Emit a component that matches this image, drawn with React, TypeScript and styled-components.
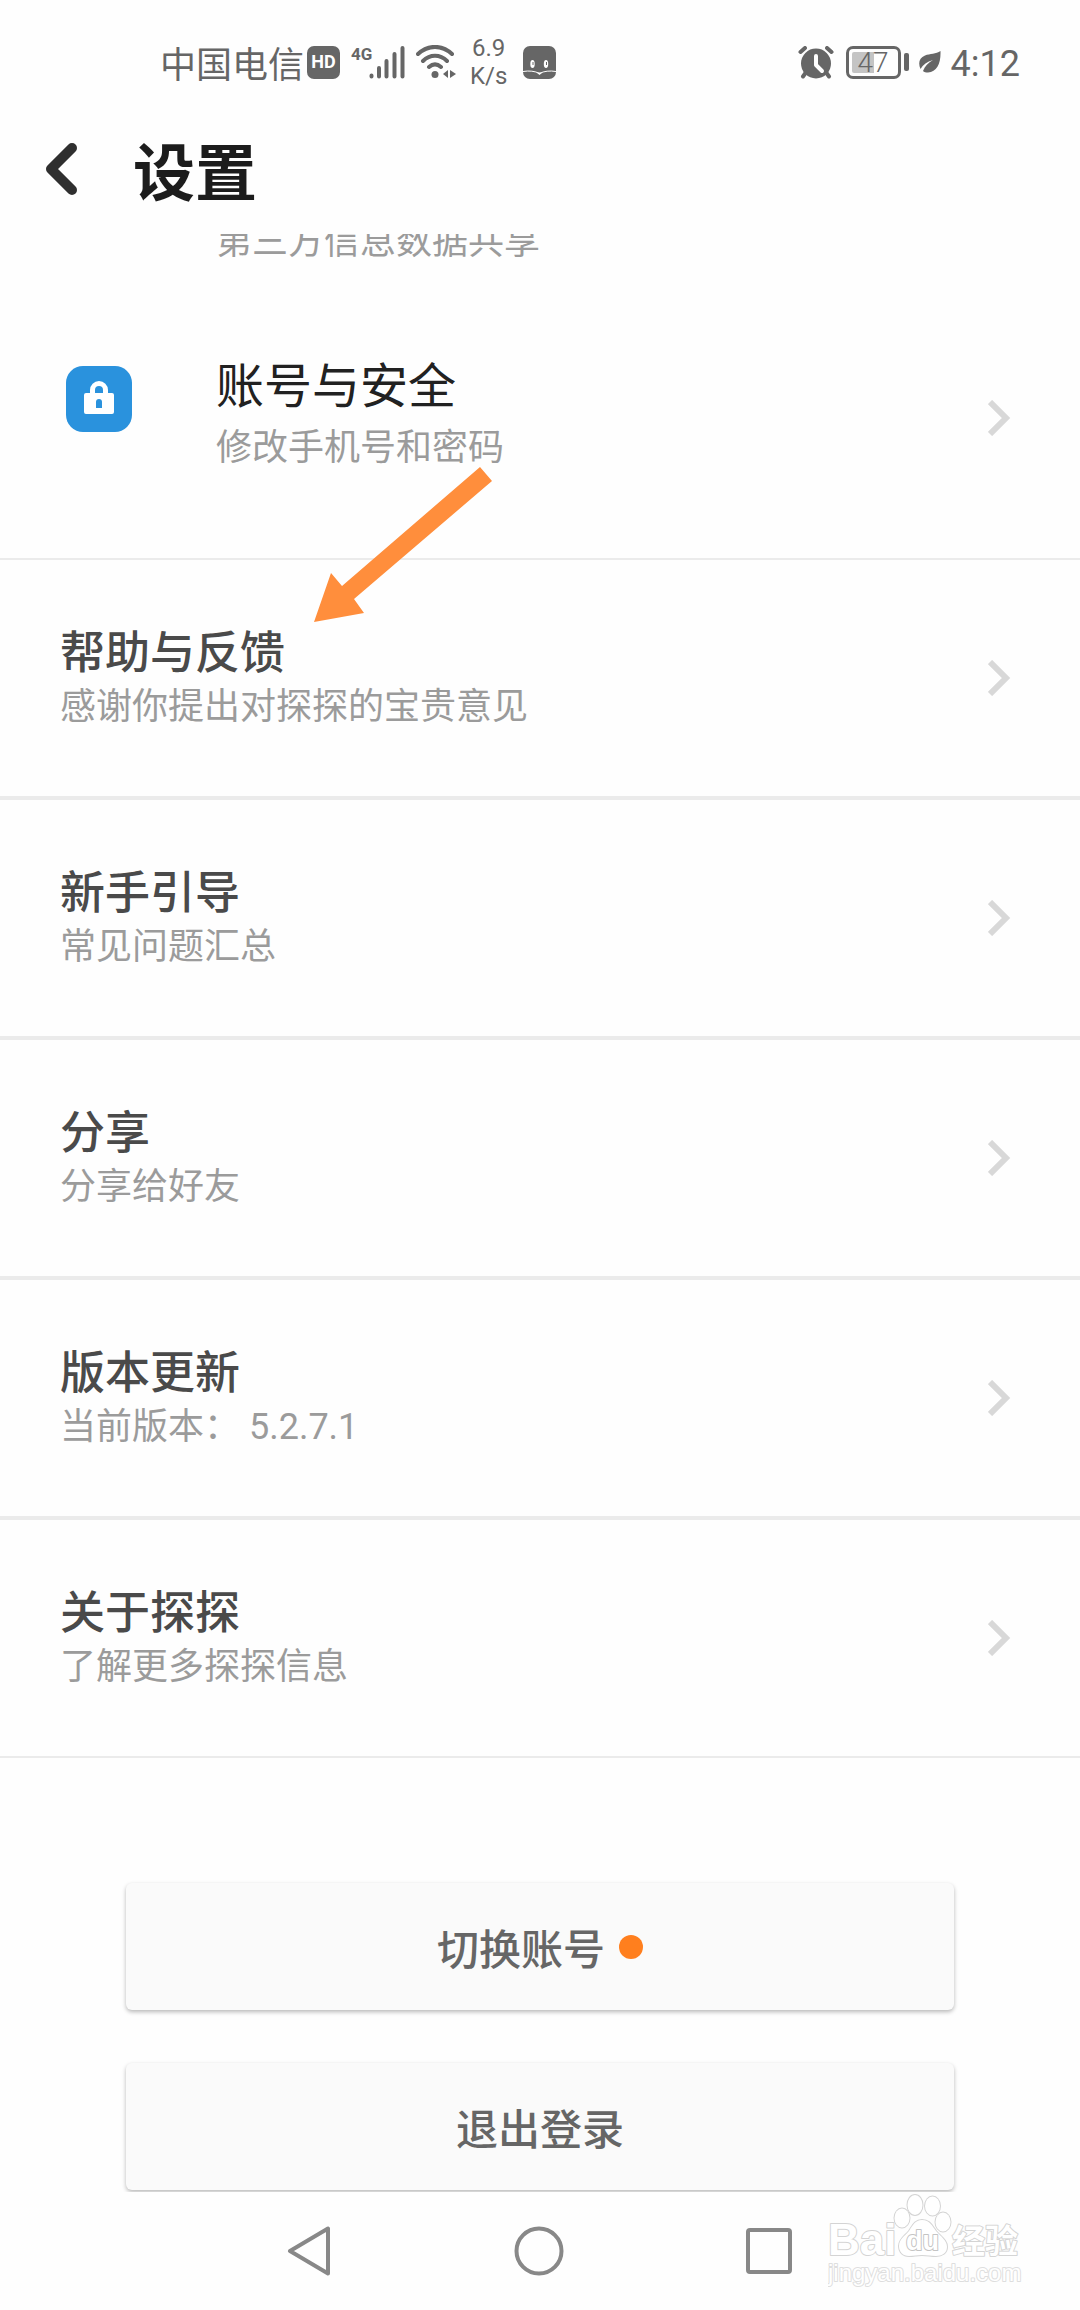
import React from 'react';
import styled, { createGlobalStyle } from 'styled-components';

const GlobalStyle = createGlobalStyle`
  * { box-sizing: border-box; }
  body {
    margin: 0;
    background: #fefefe;
    font-family: Roboto, 'Noto Sans CJK SC', sans-serif;
    color: #4a4a4a;
  }
  button {
    border: 0;
    padding: 0;
    background: none;
    font: inherit;
    color: inherit;
    text-align: left;
    cursor: pointer;
  }
  svg { display: block; flex: none; }
`;

const Screen = styled.div`
  position: relative;
  display: flex;
  flex-direction: column;
  min-height: 100vh;
`;

const StatusBar = styled.div`
  display: flex;
  justify-content: space-between;
  align-items: center;
  height: 124px;
  padding: 0 60px 0 160px;
  color: #666;
  font-size: 36px;
  line-height: 48px;
`;

const StatusGroup = styled.div<{ $gap: number }>`
  display: flex;
  align-items: center;
  gap: ${(p) => p.$gap}px;
`;

const Carrier = styled.div`
  display: flex;
  align-items: center;
  gap: 3px;
  font-family: 'Noto Sans CJK SC', sans-serif;
`;

const HdBadge = styled.span`
  display: flex;
  align-items: center;
  justify-content: center;
  width: 33px;
  height: 33px;
  border-radius: 7px;
  background: #666;
  color: #fff;
  font-family: Roboto, sans-serif;
  font-size: 18px;
  font-weight: 700;
`;

const Signal = styled.div`
  display: flex;
  align-items: flex-start;
`;

const NetworkType = styled.span`
  width: 18px;
  font-size: 17px;
  font-weight: 700;
  line-height: 17px;
`;

const Speed = styled.div`
  display: flex;
  flex-direction: column;
  align-items: center;
  padding: 0 5px 0 3px;
  font-size: 24px;
  line-height: 28px;
`;

const Clock = styled.span`
  padding-top: 4px;
`;

const Battery = styled.div`
  display: flex;
  align-items: center;
  gap: 3px;
`;

const BatteryCase = styled.div`
  width: 55px;
  height: 33px;
  border: 3px solid #666;
  border-radius: 7px;
  padding: 3px;
`;

const BatteryLevel = styled.div`
  height: 21px;
  border-radius: 2px;
  background: linear-gradient(90deg, #c4c4c4 50%, transparent 50%);
  text-align: center;
  font-size: 28px;
  font-weight: 300;
  line-height: 22px;
`;

const BatteryTip = styled.span`
  width: 5px;
  height: 18px;
  border-radius: 2px;
  background: #666;
`;

const Header = styled.header`
  display: flex;
  align-items: center;
  gap: 54px;
  height: 110px;
  padding: 0 43px 20px;
`;

const Title = styled.h1`
  margin: 0;
  color: #1c1c1c;
  font-family: 'Noto Sans CJK SC', sans-serif;
  font-size: 62px;
  line-height: 80px;
  font-weight: 700;
`;

const Main = styled.main`
  flex: 1;
  overflow: hidden;
`;

const CutRow = styled.div`
  display: flex;
  align-items: flex-end;
  height: 44px;
  padding: 0 216px 9px;
  overflow: hidden;
`;

const List = styled.ul`
  margin: 0;
  padding: 0;
  list-style: none;
`;

const Item = styled.li<{ $line: number }>`
  border-bottom: ${(p) => p.$line}px solid #ebebeb;
`;

const Row = styled.button<{ $height: number }>`
  display: flex;
  align-items: center;
  width: 100%;
  height: ${(p) => p.$height}px;
  padding: 0 68px 0 60px;
`;

const IconSlot = styled.span`
  width: 156px;
  padding: 0 0 38px 6px;
`;

const Labels = styled.span<{ $top?: number; $bottom?: number }>`
  display: flex;
  flex: 1;
  flex-direction: column;
  padding: ${(p) => p.$top ?? 0}px 0 ${(p) => p.$bottom ?? 0}px;
`;

const AccountName = styled.span`
  color: #212121;
  font-size: 48px;
  line-height: 68px;
`;

const RowName = styled.span`
  font-size: 45px;
  line-height: 52px;
  font-weight: 500;
`;

const Note = styled.span`
  color: #9b9b9b;
  font-size: 36px;
  line-height: 54px;
  white-space: pre;
`;

const Actions = styled.div`
  display: flex;
  flex-direction: column;
  gap: 53px;
  padding: 125px 126px 2px;
`;

const Action = styled.button`
  display: flex;
  align-items: center;
  justify-content: center;
  gap: 14px;
  height: 127px;
  border-radius: 6px;
  background: #fafafa;
  box-shadow: 0 2px 4px rgba(0, 0, 0, 0.28);
  color: #666;
  font-family: 'Noto Sans CJK SC', sans-serif;
  font-size: 42px;
  font-weight: 500;
  line-height: 56px;
`;

const Dot = styled.span`
  width: 24px;
  height: 24px;
  border-radius: 50%;
  background: #ff7f1e;
`;

const NavBar = styled.nav`
  display: flex;
  justify-content: space-between;
  align-items: center;
  height: 118px;
  padding: 0 286px 0 284px;
`;

const Pointer = styled.svg`
  position: absolute;
  left: 314px;
  top: 467px;
`;

const Watermark = styled.svg`
  position: absolute;
  right: 52px;
  bottom: 18px;
`;

const Chevron = () => (
  <svg width="24" height="36" viewBox="0 0 24 36" fill="none" stroke="#d8d8d8" strokeWidth="6" aria-hidden="true">
    <path d="M2 2l16 16L2 34" />
  </svg>
);

const LockIcon = () => (
  <svg width="66" height="66" viewBox="0 0 66 66" aria-hidden="true">
    <rect width="66" height="66" rx="17" fill="#2a92dd" />
    <path
      d="M20 27h4v-3a9 9 0 0 1 18 0v3h4a2 2 0 0 1 2 2v17a2 2 0 0 1-2 2H20a2 2 0 0 1-2-2V29a2 2 0 0 1 2-2zm9 0h8v-3a4 4 0 0 0-8 0z"
      fill="#fff"
      fillRule="evenodd"
    />
    <path d="M30 42v-6a3 3 0 0 1 6 0v6z" fill="#2a92dd" />
  </svg>
);

const SignalIcon = () => (
  <svg width="36" height="33" viewBox="0 0 36 33" stroke="#666" strokeWidth="4" strokeLinecap="round" aria-hidden="true">
    <path d="M2.500 29.500v1M10 22v8.500M17.500 15v15.500M25.500 8v22.500M33.500 2v28.500" />
  </svg>
);

const WifiIcon = () => (
  <svg width="40" height="34" viewBox="0 0 40 34" fill="none" stroke="#666" strokeWidth="4" strokeLinecap="round" aria-hidden="true">
    <path d="M2 9C12-.5 26-.5 36 9M7 16c7-7 17-7 24 0M13 22c4-3.500 8-3.500 12 0" />
    <circle cx="19" cy="29.500" r="3.500" fill="#666" stroke="none" />
    <path d="M32 25v8l-5-4zM34 25v8l6-4z" fill="#666" stroke="none" />
  </svg>
);

const FaceIcon = () => (
  <svg width="33" height="33" viewBox="0 0 33 33" aria-hidden="true">
    <rect width="33" height="33" rx="7" fill="#666" />
    <ellipse cx="9.500" cy="18" rx="2.200" ry="4" fill="#fff" />
    <ellipse cx="23" cy="18" rx="2.200" ry="4" fill="#fff" />
    <path d="M10 16v3M23.500 16v3" stroke="#666" strokeWidth="1" />
    <path d="M0 25.500c6-1 12-.5 16.500 2C21 25 27 24.500 33 25.500" fill="none" stroke="#fff" strokeWidth="1" />
    <path d="M13.500 26.500L16.500 29l3-2.500z" fill="#fff" />
  </svg>
);

const AlarmIcon = () => (
  <svg width="38" height="33" viewBox="0 0 38 33" aria-hidden="true">
    <circle cx="18" cy="17.500" r="15" fill="#666" />
    <path d="M2.500 6L7 2M33.500 6L29 2M7.500 27L5 30.500M28.500 27l2.500 3.500" stroke="#666" strokeWidth="4" strokeLinecap="round" />
    <path d="M18 10v9l6 6" fill="none" stroke="#fefefe" strokeWidth="4" strokeLinecap="round" strokeLinejoin="round" />
  </svg>
);

const LeafIcon = () => (
  <svg width="22" height="22" viewBox="0 0 22 22" aria-hidden="true">
    <path d="M21.500 0C22 12 18 21 9 21.500c-2 0-4-.5-5-1.500C6 15 9 12 14 9 8 10.500 4 13.500 1.500 18-1 12 0 7 6 4.500 11 2.500 17 3 21.500 0z" fill="#666" />
  </svg>
);

const BackIcon = () => (
  <svg width="36" height="54" viewBox="0 0 36 54" fill="none" stroke="#2f2f2f" strokeWidth="10" strokeLinecap="round" strokeLinejoin="round" aria-hidden="true">
    <path d="M29 6L8 27l21 21" />
  </svg>
);

const rows = [
  { name: '帮助与反馈', note: '感谢你提出对探探的宝贵意见' },
  { name: '新手引导', note: '常见问题汇总' },
  { name: '分享', note: '分享给好友' },
  { name: '版本更新', note: '当前版本： 5.2.7.1' },
  { name: '关于探探', note: '了解更多探探信息' },
];

export default function App() {
  return (
    <Screen>
      <GlobalStyle />
      <StatusBar>
        <StatusGroup $gap={11}>
          <Carrier>
            <span>中国电信</span>
            <HdBadge>HD</HdBadge>
          </Carrier>
          <Signal>
            <NetworkType>4G</NetworkType>
            <SignalIcon />
          </Signal>
          <WifiIcon />
          <Speed>
            <span>6.9</span>
            <span>K/s</span>
          </Speed>
          <FaceIcon />
        </StatusGroup>
        <StatusGroup $gap={10}>
          <AlarmIcon />
          <Battery>
            <BatteryCase>
              <BatteryLevel>47</BatteryLevel>
            </BatteryCase>
            <BatteryTip />
          </Battery>
          <LeafIcon />
          <Clock>4:12</Clock>
        </StatusGroup>
      </StatusBar>

      <Header>
        <button aria-label="返回">
          <BackIcon />
        </button>
        <Title>设置</Title>
      </Header>

      <Main>
        <CutRow>
          <Note>第三方信息数据共享</Note>
        </CutRow>
        <List>
          <Item $line={2}>
            <Row $height={280}>
              <IconSlot>
                <LockIcon />
              </IconSlot>
              <Labels $bottom={8}>
                <AccountName>账号与安全</AccountName>
                <Note>修改手机号和密码</Note>
              </Labels>
              <Chevron />
            </Row>
          </Item>
          {rows.map((row, i) => (
            <Item key={row.name} $line={i === rows.length - 1 ? 2 : 4}>
              <Row $height={236}>
                <Labels $top={6}>
                  <RowName>{row.name}</RowName>
                  <Note>{row.note}</Note>
                </Labels>
                <Chevron />
              </Row>
            </Item>
          ))}
        </List>
        <Actions>
          <Action>
            切换账号
            <Dot />
          </Action>
          <Action>退出登录</Action>
        </Actions>
      </Main>

      <NavBar>
        <button aria-label="后退">
          <svg width="50" height="50" viewBox="0 0 50 50" fill="none" stroke="#888" strokeWidth="4" strokeLinejoin="round">
            <path d="M44 2.500v45L6 25z" />
          </svg>
        </button>
        <button aria-label="主页">
          <svg width="50" height="50" viewBox="0 0 50 50" fill="none" stroke="#888" strokeWidth="4">
            <circle cx="25" cy="25" r="22.500" />
          </svg>
        </button>
        <button aria-label="最近任务">
          <svg width="50" height="50" viewBox="0 0 50 50" fill="none" stroke="#888" strokeWidth="4">
            <rect x="4" y="4" width="42" height="42" rx="2" />
          </svg>
        </button>
      </NavBar>

      <Pointer width="180" height="156" viewBox="0 0 180 156" aria-hidden="true">
        <path d="M166 0l12 14L40 132l10 14-50 9 17-49 11 13z" fill="#ff8e3c" />
      </Pointer>

      <Watermark
        width="200"
        height="100"
        viewBox="0 0 200 100"
        fill="#fff"
        stroke="#d4d4d4"
        strokeWidth="2"
        strokeLinejoin="round"
        paintOrder="stroke"
        fontFamily="'Liberation Sans', 'Noto Sans CJK SC', sans-serif"
      >
        <text x="0" y="63" fontSize="44" fontWeight="700">Bai</text>
        <ellipse cx="74" cy="26" rx="7.500" ry="9.500" />
        <ellipse cx="87" cy="13" rx="7.500" ry="10" />
        <ellipse cx="104.500" cy="14" rx="7.500" ry="9.500" />
        <ellipse cx="115" cy="30" rx="7.500" ry="9.500" />
        <path d="M94 28c8 0 10 6 14 11 5 6 11 9 11 16 0 6-5 9-11 9-5 0-9-1-14-1s-8 1-13 1c-6 0-10-4-10-10 0-7 6-10 10-15 4-6 6-11 13-11z" />
        <text x="78" y="58" fontSize="27" fontWeight="700" stroke="#c4c4c4">du</text>
        <text x="124" y="61" fontSize="33" fontWeight="700">经验</text>
        <text x="0" y="89" fontSize="24" stroke="#dedede">jingyan.baidu.com</text>
      </Watermark>
    </Screen>
  );
}
